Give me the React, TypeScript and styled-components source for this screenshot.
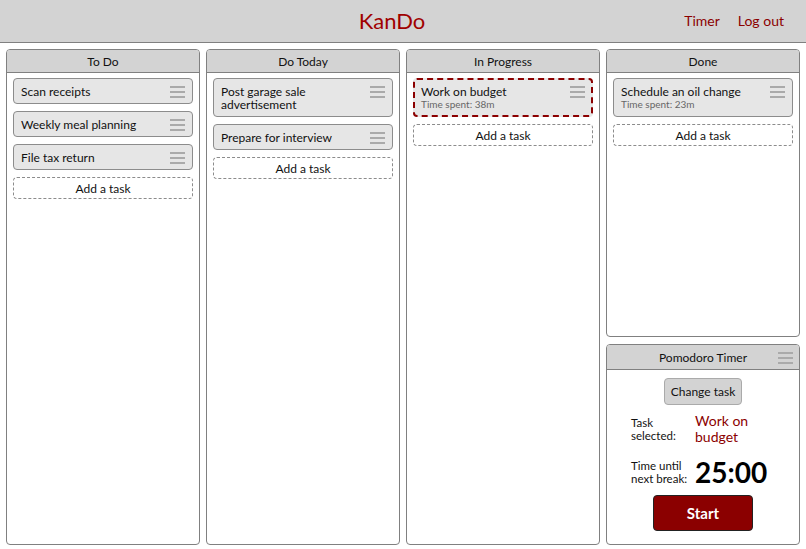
import React from "react";
import styled, { createGlobalStyle } from "styled-components";

const GlobalStyle = createGlobalStyle`
  html, body {
    margin: 0;
    padding: 0;
    background: #fff;
    font-family: Lato, "Open Sans", sans-serif;
    color: #111;
  }
`;

const Page = styled.div`
  width: 806px;
  height: 549px;
  display: flex;
  flex-direction: column;
  overflow: hidden;
`;

const Header = styled.header`
  height: 40px;
  flex: none;
  background: #d3d3d3;
  border-bottom: 1px solid #808080;
  display: grid;
  grid-template-columns: 1fr auto 1fr;
  align-items: center;
  padding: 0 22px 2px 0;
`;

const Title = styled.h1`
  grid-column: 2;
  margin: 0;
  font-size: 22px;
  font-weight: 400;
  color: #a00000;
`;

const Nav = styled.nav`
  grid-column: 3;
  justify-self: end;
  display: flex;
  gap: 18px;
  font-size: 14px;
  color: #8b0000;
`;

const Board = styled.main`
  flex: 1;
  display: grid;
  grid-template-columns: repeat(4, 1fr);
  gap: 6px;
  padding: 6px 6px 4px;
  min-height: 0;
`;

const Stack = styled.div`
  display: flex;
  flex-direction: column;
  gap: 7px;
  min-height: 0;
`;

const Panel = styled.section<{ $grow?: boolean; $height?: number }>`
  border: 1px solid #808080;
  border-radius: 4px;
  background: #fff;
  display: flex;
  flex-direction: column;
  overflow: hidden;
  ${(p) => (p.$grow ? "flex: 1;" : "")}
  ${(p) => (p.$height ? `height: ${p.$height}px; flex: none;` : "")}
`;

const PanelHead = styled.div<{ $tall?: boolean }>`
  position: relative;
  height: ${(p) => (p.$tall ? 24 : 22)}px;
  background: #d3d3d3;
  border-bottom: 1px solid #808080;
  display: flex;
  align-items: center;
  justify-content: center;
  font-size: 12px;
`;

const PanelBody = styled.div`
  padding: 5px 6px 6px;
  display: flex;
  flex-direction: column;
  gap: 7px;
`;

const Card = styled.div<{ $active?: boolean }>`
  display: flex;
  justify-content: space-between;
  align-items: flex-start;
  gap: 8px;
  background: #e6e6e6;
  border: ${(p) => (p.$active ? "2px dashed #8b0000" : "1px solid #8c8c8c")};
  border-radius: 4px;
  padding: ${(p) => (p.$active ? "5px 6px 4px 6px" : "6px 7px 5px 7px")};
  font-size: 12px;
  line-height: 13px;
`;

const CardText = styled.div`
  display: flex;
  flex-direction: column;
`;

const Spent = styled.span`
  font-size: 10px;
  line-height: 13px;
  color: #666;
`;

const Grip = styled.span<{ $overlay?: boolean }>`
  display: flex;
  flex-direction: column;
  gap: 3px;
  width: 15px;
  padding-top: 1px;
  flex: none;
  ${(p) => (p.$overlay ? "position: absolute; right: 6px; top: 6px;" : "")}
  i {
    display: block;
    height: 2px;
    background: #aaa;
  }
`;

const AddTask = styled.div`
  height: 20px;
  border: 1px dashed #8c8c8c;
  border-radius: 4px;
  display: flex;
  align-items: center;
  justify-content: center;
  font-size: 12px;
`;

const TimerBody = styled.div`
  display: flex;
  flex-direction: column;
  align-items: center;
  padding: 8px 10px 0;
`;

const GreyButton = styled.button`
  font-family: inherit;
  font-size: 12px;
  color: #111;
  background: #d3d3d3;
  border: 1px solid #aaa;
  border-radius: 4px;
  width: 78px;
  height: 27px;
  padding: 0;
`;

const Info = styled.div`
  box-sizing: border-box;
  display: grid;
  grid-template-columns: 64px 1fr;
  row-gap: 13px;
  width: 100%;
  padding-left: 14px;
  margin-top: 8px;
  align-items: center;
`;

const Label = styled.div`
  font-size: 11.5px;
  line-height: 13px;
  white-space: nowrap;
`;

const Value = styled.div<{ $big?: boolean }>`
  font-size: ${(p) => (p.$big ? "28px" : "14px")};
  font-weight: ${(p) => (p.$big ? 700 : 400)};
  line-height: ${(p) => (p.$big ? "28px" : "16px")};
  color: ${(p) => (p.$big ? "#000" : "#8b0000")};
`;

const StartButton = styled.button`
  margin-top: 9px;
  width: 100px;
  height: 36px;
  background: #8b0000;
  color: #fff;
  border: 1px solid #222;
  border-radius: 4px;
  font-family: inherit;
  font-size: 15px;
  font-weight: 700;
`;

const Hamburger = ({ overlay }: { overlay?: boolean }) => (
  <Grip $overlay={overlay}>
    <i />
    <i />
    <i />
  </Grip>
);

type Task = { title: string; spent?: string; active?: boolean };

const columns: { name: string; tasks: Task[] }[] = [
  {
    name: "To Do",
    tasks: [
      { title: "Scan receipts" },
      { title: "Weekly meal planning" },
      { title: "File tax return" },
    ],
  },
  {
    name: "Do Today",
    tasks: [
      { title: "Post garage sale advertisement" },
      { title: "Prepare for interview" },
    ],
  },
  {
    name: "In Progress",
    tasks: [{ title: "Work on budget", spent: "38m", active: true }],
  },
  {
    name: "Done",
    tasks: [{ title: "Schedule an oil change", spent: "23m" }],
  },
];

function Column({ name, tasks, grow }: { name: string; tasks: Task[]; grow?: boolean }) {
  return (
    <Panel $grow={grow}>
      <PanelHead>{name}</PanelHead>
      <PanelBody>
        {tasks.map((t) => (
          <Card key={t.title} $active={t.active}>
            <CardText>
              <span>{t.title}</span>
              {t.spent && <Spent>Time spent: {t.spent}</Spent>}
            </CardText>
            <Hamburger />
          </Card>
        ))}
        <AddTask>Add a task</AddTask>
      </PanelBody>
    </Panel>
  );
}

export default function App() {
  return (
    <Page>
      <GlobalStyle />
      <Header>
        <Title>KanDo</Title>
        <Nav>
          <span>Timer</span>
          <span>Log out</span>
        </Nav>
      </Header>
      <Board>
        {columns.slice(0, 3).map((c) => (
          <Column key={c.name} name={c.name} tasks={c.tasks} grow />
        ))}
        <Stack>
          <Column name={columns[3].name} tasks={columns[3].tasks} grow />
          <Panel $height={199}>
            <PanelHead $tall>
              Pomodoro Timer
              <Hamburger overlay />
            </PanelHead>
            <TimerBody>
              <GreyButton>Change task</GreyButton>
              <Info>
                <Label>
                  Task
                  <br />
                  selected:
                </Label>
                <Value>
                  Work on
                  <br />
                  budget
                </Value>
                <Label>
                  Time until
                  <br />
                  next break:
                </Label>
                <Value $big>25:00</Value>
              </Info>
              <StartButton>Start</StartButton>
            </TimerBody>
          </Panel>
        </Stack>
      </Board>
    </Page>
  );
}
